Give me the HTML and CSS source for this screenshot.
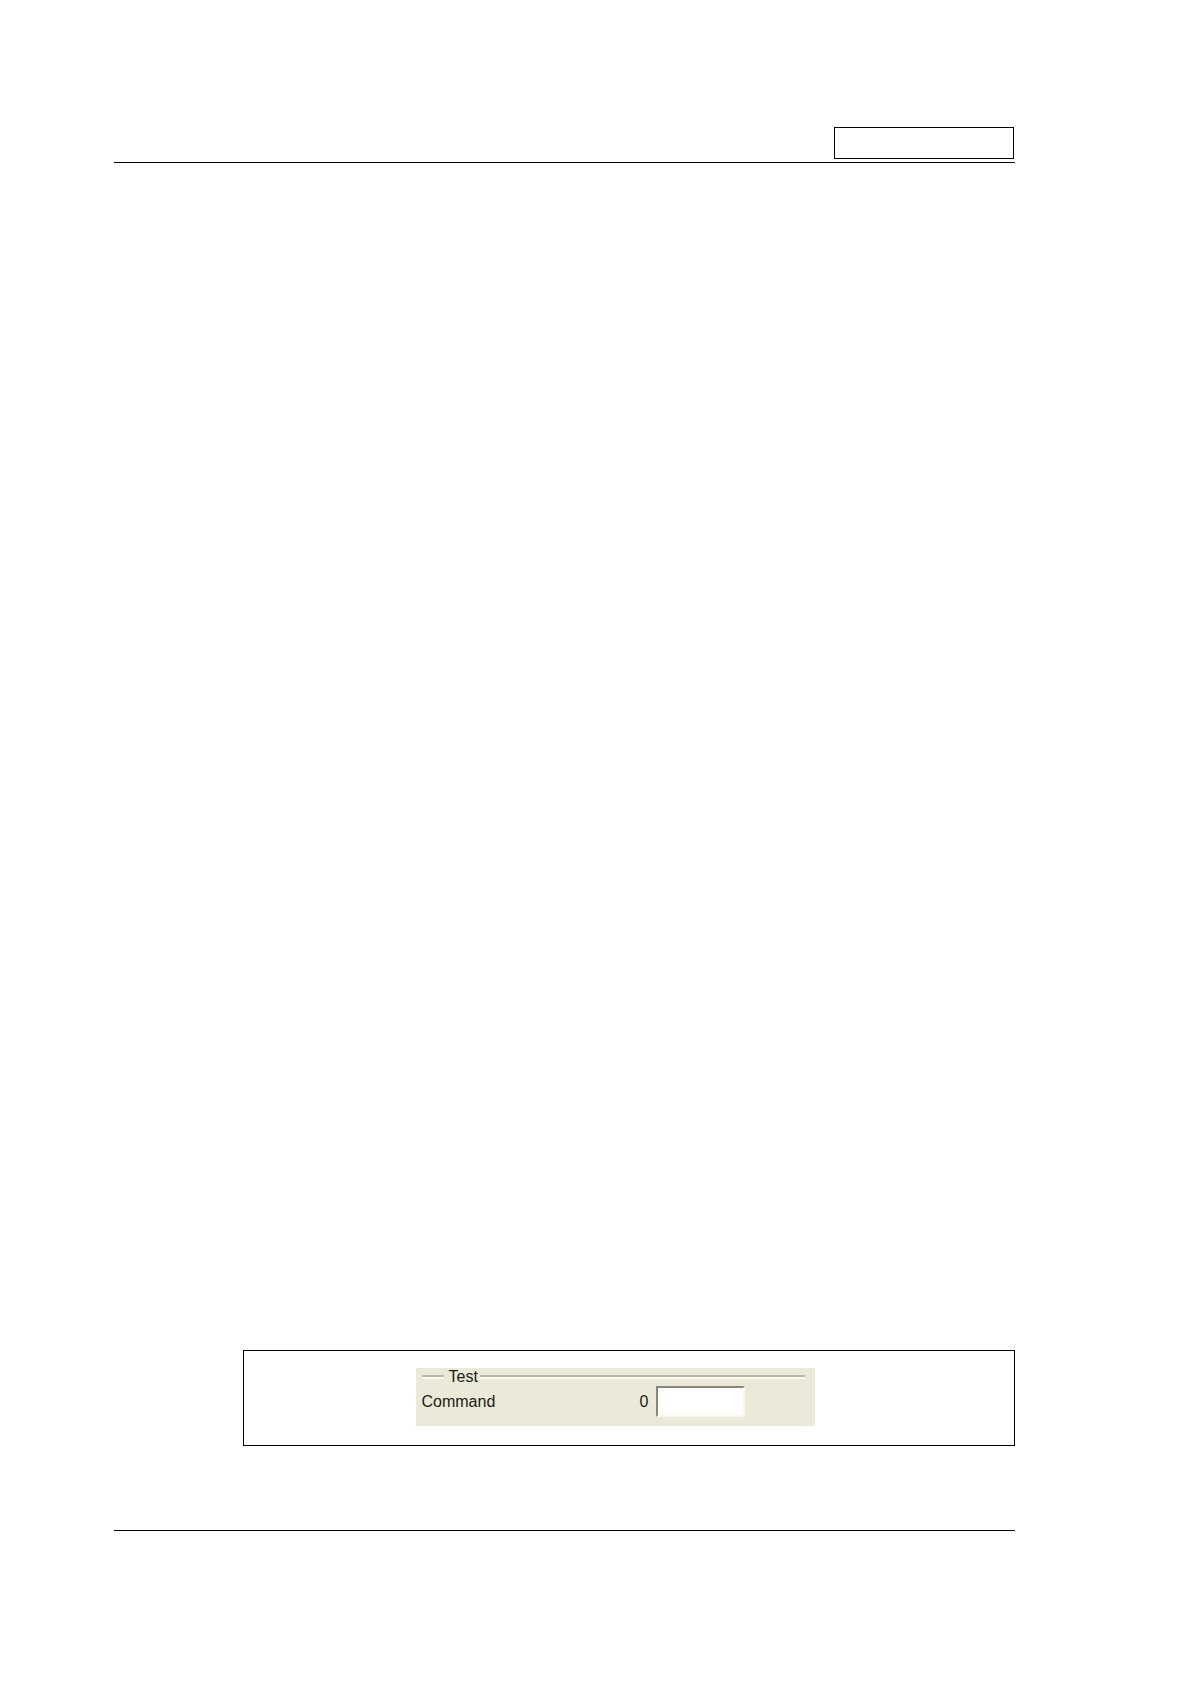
FILE: index.html
```
<!DOCTYPE html>
<html lang="en">
<head>
    <meta charset="UTF-8">
    <meta name="viewport" content="width=device-width, initial-scale=1.0">
    <title>Test Command</title>
    <link rel="stylesheet" href="styles.css">
</head>
<body>
    <div class="page">
        <header class="page-header">
            <div class="header-box"></div>
        </header>

        <main class="content">
            <div class="figure">
                <form class="panel">
                    <fieldset class="group">
                        <legend>Test</legend>
                        <div class="row">
                            <label for="command">Command</label>
                            <output class="value" for="command">0</output>
                            <input type="text" id="command" class="field">
                        </div>
                    </fieldset>
                </form>
            </div>
        </main>

        <footer class="page-footer"></footer>
    </div>
</body>
</html>
```

FILE: styles.css
```
* { box-sizing: border-box; }

body {
    margin: 0;
    background: #fff;
    color: #1c1a12;
    font-family: "Liberation Sans", Arial, sans-serif;
    font-size: 16px;
    line-height: 18px;
}

.page {
    display: flex;
    flex-direction: column;
    min-height: 100vh;
    padding: 127px 175px 153px 114px;
}

.page-header {
    display: flex;
    justify-content: flex-end;
    padding: 0 1px 3px 0;
    border-bottom: 1px solid #000;
}

.header-box {
    width: 180px;
    height: 32px;
    border: 1px solid #000;
}

.content {
    flex: 1;
    display: flex;
    flex-direction: column;
    justify-content: flex-end;
    padding: 0 0 84px 129px;
}

.page-footer {
    border-top: 1px solid #000;
}

.figure {
    display: flex;
    justify-content: center;
    padding: 17px 0 19px;
    border: 1px solid #000;
}

.panel {
    width: 399px;
    margin-right: 28px;
    padding: 0 10px 9px 6px;
    background: #ebead9;
}

/* only the top edge of the group is drawn, the legend cuts into it */
.group {
    margin: 0;
    padding: 0 0 0 22px;
    border: 0;
    border-top: 4px solid #b9b7a5;
    border-image: linear-gradient(#b9b7a5 2px, #fbfaee 2px) 4 0 0 0;
}

.group legend {
    padding: 0 2px 0 5px;
}

.row {
    display: flex;
    align-items: center;
    margin-left: -22px;
}

.value {
    margin-left: auto;
}

.field {
    width: 89px;
    height: 31px;
    margin: 0 60px 0 7px;
    padding: 0 4px;
    border: 2px solid;
    border-color: #8a877a #faf9ec #faf9ec #8a877a;
    background: #fff;
    font: inherit;
}
```
